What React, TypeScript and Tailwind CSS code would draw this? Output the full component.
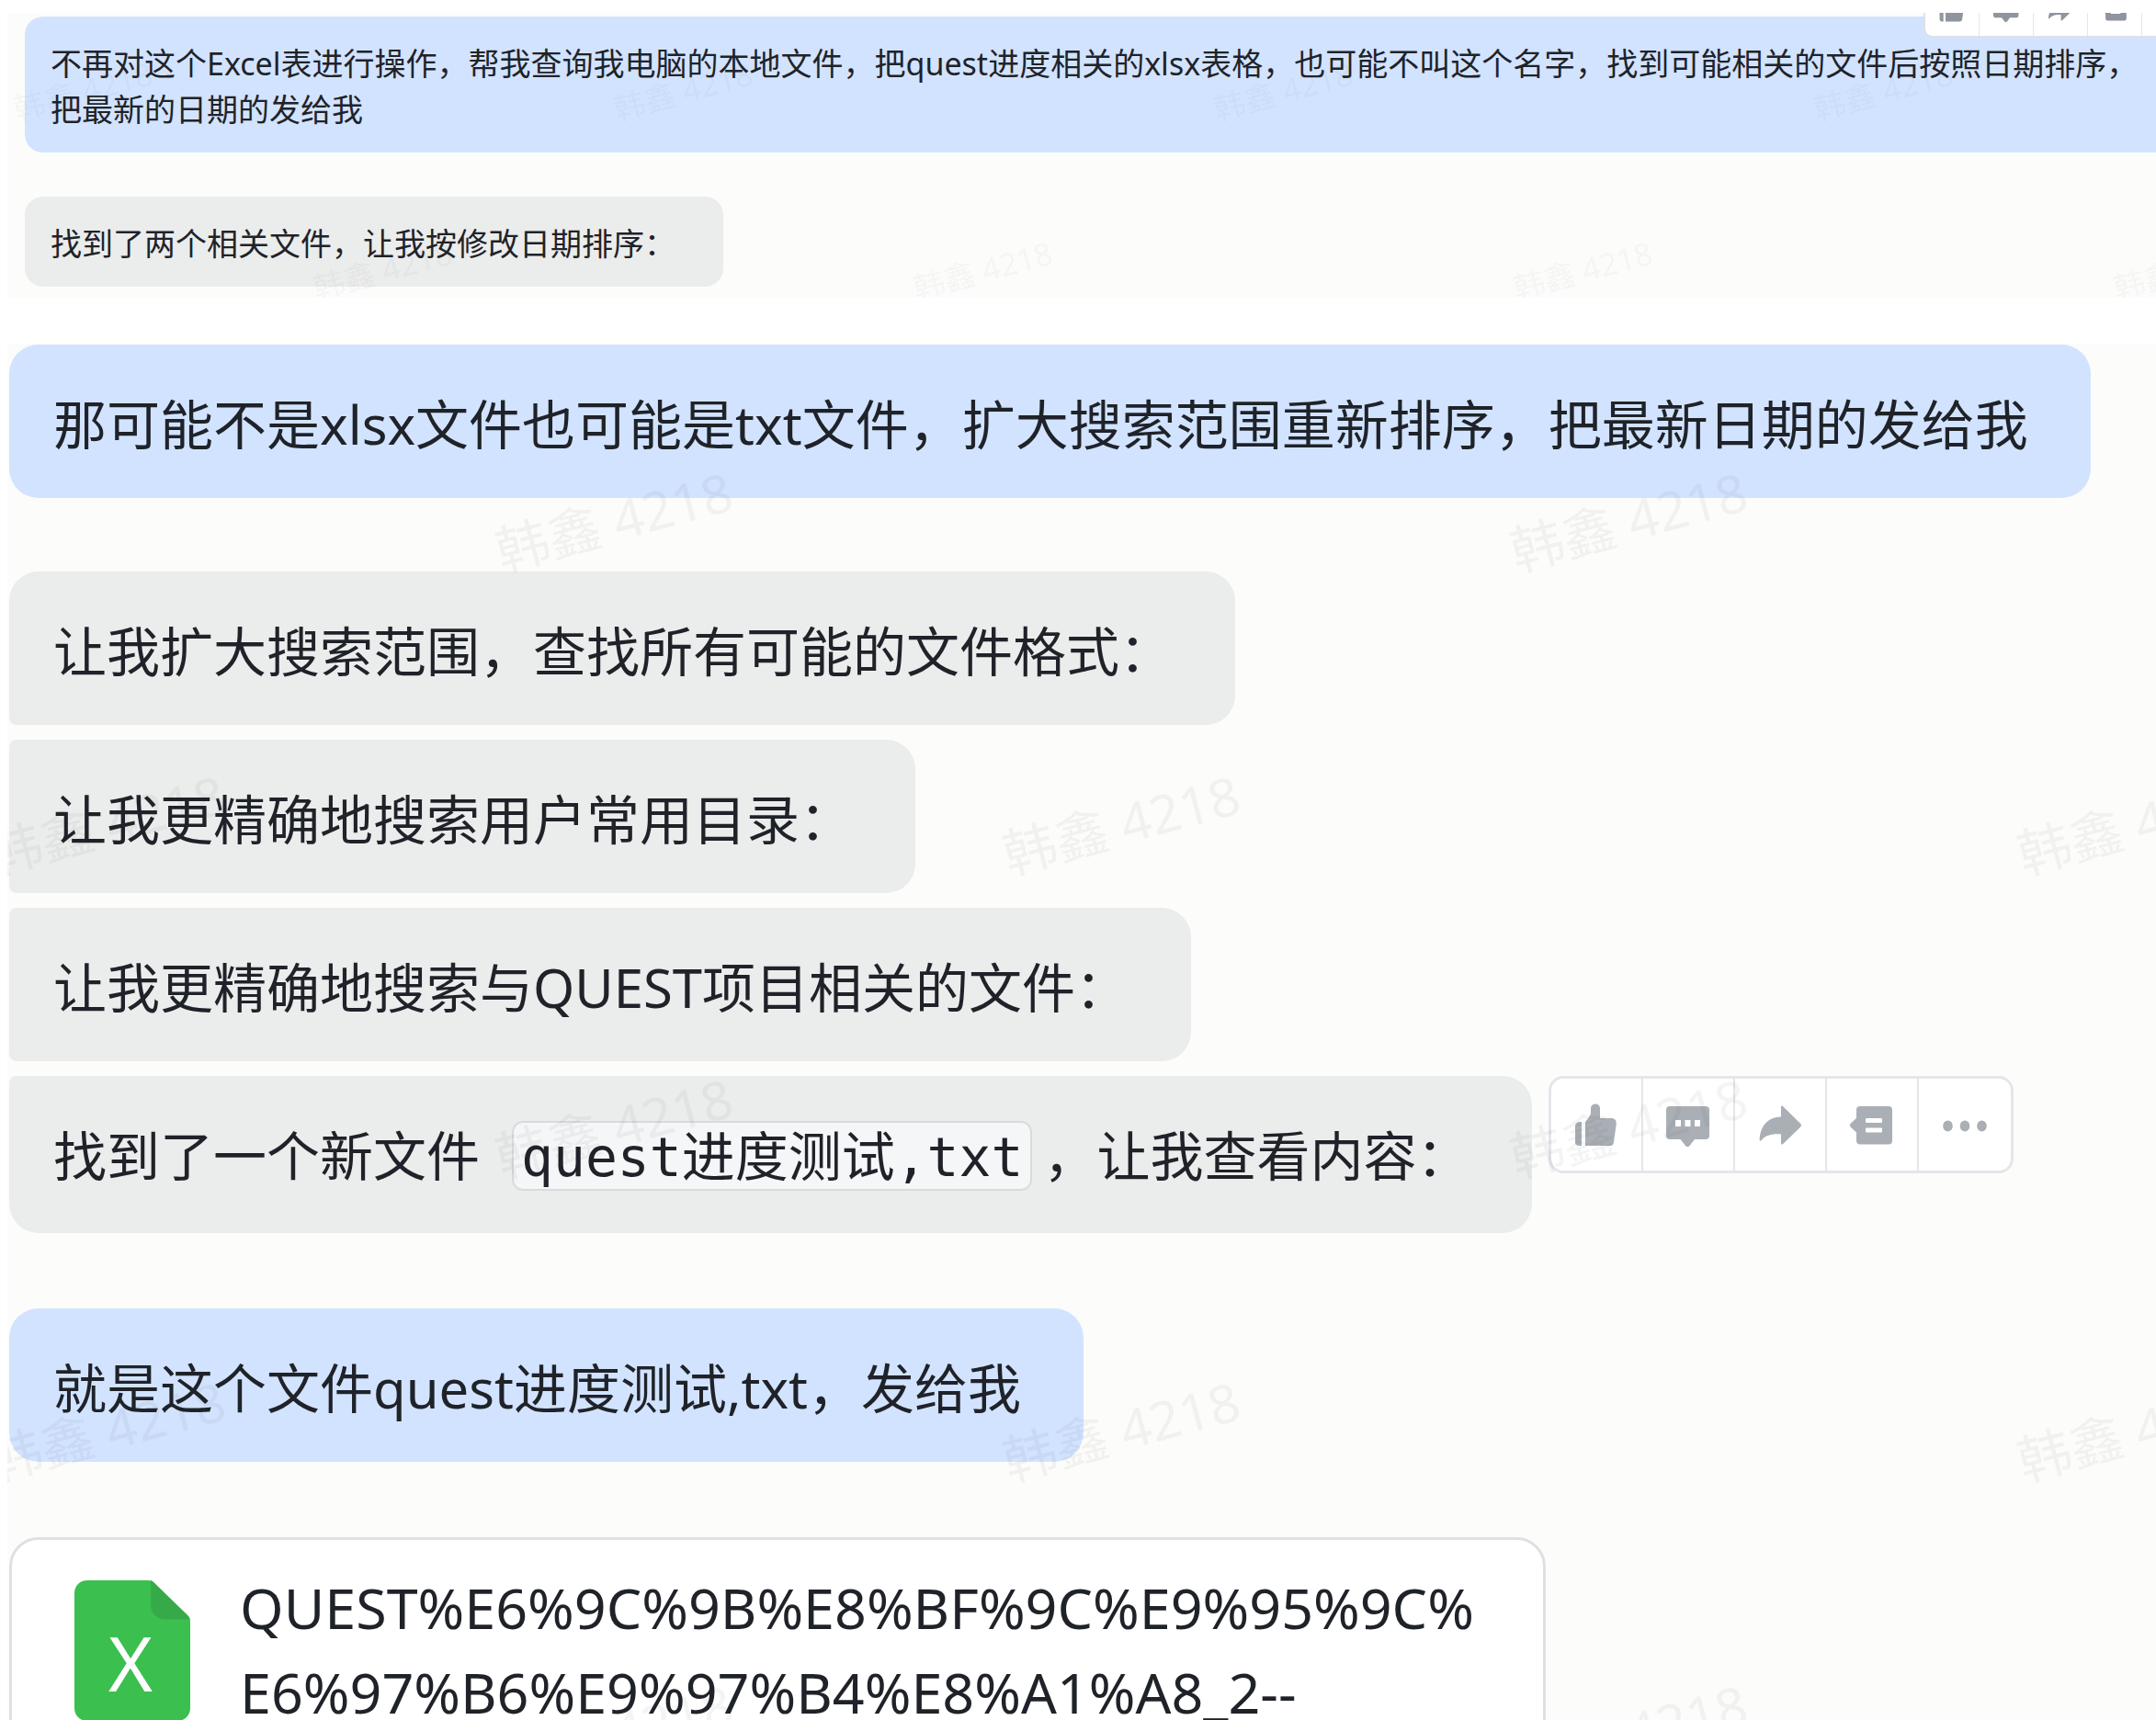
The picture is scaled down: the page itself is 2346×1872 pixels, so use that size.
import clsx from "clsx";
import type { ReactNode } from "react";

type IconProps = { className?: string };

function ThumbIcon({ className }: IconProps) {
	return (
		<svg viewBox="0 0 48 48" fill="currentColor" className={className} aria-hidden="true">
			<path d="M8 21v26H5a4 4 0 0 1-4-4V26a5 5 0 0 1 5-5z" />
			<path d="M12 47V21l4-5 2-4V6.500C18 3.500 20 1.400 23 1.400s5 2.100 5 5.100V17h12c4 0 6.300 2.500 5.700 6.500L43 43c-.4 2.700-2 4-4.500 4z" />
		</svg>
	);
}

function CommentIcon({ className }: IconProps) {
	return (
		<svg viewBox="0 0 48 48" fill="currentColor" className={className} aria-hidden="true">
			<path
				fillRule="evenodd"
				d="M4 4h39a4 4 0 0 1 4 4v28a4 4 0 0 1-4 4H31l-5.500 7a3 3 0 0 1-4.500 0L15.500 40H4a4 4 0 0 1-4-4V8a4 4 0 0 1 4-4zm6 15v7h6v-7zm10.500 0v7h6v-7zm10.500 0v7h6v-7z"
			/>
		</svg>
	);
}

function ForwardIcon({ className }: IconProps) {
	return (
		<svg viewBox="0 0 48 48" fill="currentColor" className={className} aria-hidden="true">
			<path d="M25 5c0-1.500 1.200-1.800 2.200-.8l18.800 18.500a2.800 2.800 0 0 1 0 4L27.200 45c-1 1-2.200.6-2.200-.8V34.500C15.500 33.500 8 35.500 3.600 41c-1 1.200-2 .8-2-.6C2.500 26 10 16 25 15.500z" />
		</svg>
	);
}

function ThreadIcon({ className }: IconProps) {
	return (
		<svg viewBox="0 0 48 48" fill="currentColor" className={className} aria-hidden="true">
			<path
				fillRule="evenodd"
				d="M11 4h31a4 4 0 0 1 4 4v33.500a4 4 0 0 1-4 4H11a4 4 0 0 1-4-4V32.500L1 27a3 3 0 0 1 0-4.500L7 17V8a4 4 0 0 1 4-4zm7 13a1 1 0 0 0-1 1v3a1 1 0 0 0 1 1h16a1 1 0 0 0 1-1v-3a1 1 0 0 0-1-1zm0 10.500a1 1 0 0 0-1 1v3a1 1 0 0 0 1 1h16a1 1 0 0 0 1-1v-3a1 1 0 0 0-1-1z"
			/>
		</svg>
	);
}

function MoreIcon({ className }: IconProps) {
	return (
		<svg viewBox="0 0 48 48" fill="currentColor" className={className} aria-hidden="true">
			<ellipse cx="5.500" cy="25.500" rx="5.300" ry="6" />
			<ellipse cx="24" cy="25.500" rx="5.300" ry="6" />
			<ellipse cx="42.500" cy="25.500" rx="5.300" ry="6" />
		</svg>
	);
}

const actions = [
	{ label: "点赞", Icon: ThumbIcon },
	{ label: "评论", Icon: CommentIcon },
	{ label: "转发", Icon: ForwardIcon },
	{ label: "话题", Icon: ThreadIcon },
	{ label: "更多", Icon: MoreIcon },
];

function Actions({ small = false }: { small?: boolean }) {
	return (
		<div
			className={clsx(
				"flex shrink-0 divide-[#e4e6e9] overflow-hidden bg-white",
				small
					? "h-[63px] divide-x rounded-[10px] border-2 border-[#dee0e3] text-[#8f959e]"
					: "h-[106px] divide-x-2 rounded-[16px] border-3 border-[#e4e6e9] text-[#a9afb5]",
			)}
		>
			{actions.map(({ label, Icon }) => (
				<button
					key={label}
					type="button"
					aria-label={label}
					className={clsx(
						"flex items-center justify-center",
						small ? "w-[59px]" : "w-[100px]",
					)}
				>
					<Icon className={small ? "size-7" : "size-12"} />
				</button>
			))}
		</div>
	);
}

type BubbleProps = {
	mine?: boolean;
	small?: boolean;
	className?: string;
	children: ReactNode;
};

function Bubble({ mine = false, small = false, className, children }: BubbleProps) {
	return (
		<div
			className={clsx(
				"w-fit shrink-0 whitespace-nowrap",
				mine ? "bg-[#d2e3ff]" : "bg-[#ebecec]",
				small
					? "rounded-[20px] pt-[26px] pr-[52px] pb-[22px] pl-7 text-[34px] leading-[50px]"
					: "pt-[43px] pr-[68px] pb-[37px] pl-12 text-[58px] leading-[87px]",
				className,
			)}
		>
			{children}
		</div>
	);
}

// Staggered name stamps laid over the whole conversation
function Watermark({ small = false }: { small?: boolean }) {
	return (
		<div
			aria-hidden="true"
			className={clsx(
				"pointer-events-none absolute inset-0 select-none overflow-hidden whitespace-nowrap text-[#1f2329]/5",
				small ? "-mt-3 text-[34px]" : "pt-[27px] text-[58px]",
			)}
		>
			{(small ? [1, 0] : [0, 1, 0, 1, 0]).map((shifted, row) => (
				<div
					key={row}
					className={clsx(
						"flex",
						small && (shifted ? "-ml-[244px]" : "ml-[82px]"),
						!small && (shifted ? "-ml-[444px]" : "ml-[108px]"),
					)}
				>
					{[0, 1, 2, 3].map((col) => (
						<div
							key={col}
							className={clsx(
								"flex shrink-0 items-center justify-center",
								small ? "h-[195px] w-[653px]" : "h-[330px] w-[1104px]",
							)}
						>
							<span className="-rotate-15">韩鑫 4218</span>
						</div>
					))}
				</div>
			))}
		</div>
	);
}

function FileCard() {
	return (
		<div className="mt-[82px] flex w-[1672px] items-start gap-[54px] rounded-[32px] border-3 border-[#dee0e3] bg-white px-[68px] pt-7 pb-12">
			<svg viewBox="0 0 126 153" className="mt-4 h-[153px] w-[126px] shrink-0" role="img" aria-label="Excel">
				<path
					fill="#3bbf4e"
					d="M14 0h66c3 0 5 1 7 3l36 35c2 2 3 4 3 7v94c0 8-6 14-14 14H14c-8 0-14-6-14-14V14C0 6 6 0 14 0z"
				/>
				<path fill="#36aa48" d="M83 0c1.500.5 3 1.500 4 3l36 35c1.300 1.300 2.300 2.500 2.800 4.500H98c-8 0-15-7-15-15z" />
				<text x="61" y="121" textAnchor="middle" fill="#fff" className="text-[82px]">
					X
				</text>
			</svg>
			<p className="text-[61px] leading-[92px]">
				QUEST%E6%9C%9B%E8%BF%9C%E9%95%9C%
				<br />
				E6%97%B6%E9%97%B4%E8%A1%A8_2--
			</p>
		</div>
	);
}

export default function App() {
	return (
		<main className="flex h-screen flex-col gap-[50px] overflow-hidden bg-white pt-[14px] pl-2 font-['Noto_Sans','Noto_Sans_CJK_SC',sans-serif] text-[#1f2329]">
			<section className="relative shrink-0 overflow-hidden bg-[#fcfcfb] pt-1 pb-3 pl-[19px]">
				<Bubble mine small className="min-w-full">
					不再对这个Excel表进行操作，帮我查询我电脑的本地文件，把quest进度相关的xlsx表格，也可能不叫这个名字，找到可能相关的文件后按照日期排序，
					<br />
					把最新的日期的发给我
				</Bubble>
				<Bubble small className="mt-12">
					找到了两个相关文件，让我按修改日期排序：
				</Bubble>
				<div className="absolute -top-[36px] left-[2085px]">
					<Actions small />
				</div>
				<Watermark small />
			</section>

			<section className="relative grow overflow-hidden bg-[#fcfcfb] pt-px pl-[2px]">
				<Bubble mine className="rounded-[32px]">
					那可能不是xlsx文件也可能是txt文件，扩大搜索范围重新排序，把最新日期的发给我
				</Bubble>
				<div className="mt-20 flex flex-col gap-4">
					<Bubble className="rounded-[32px] rounded-bl-lg">
						让我扩大搜索范围，查找所有可能的文件格式：
					</Bubble>
					<Bubble className="rounded-[32px] rounded-l-lg">
						让我更精确地搜索用户常用目录：
					</Bubble>
					<Bubble className="rounded-[32px] rounded-l-lg">
						让我更精确地搜索与QUEST项目相关的文件：
					</Bubble>
					<div className="flex items-start gap-[18px]">
						<Bubble className="rounded-[32px] rounded-tl-lg">
							找到了一个新文件{" "}
							<code className="mr-3 ml-5 rounded-xl border-2 border-[#d8dadc] bg-[#f5f6f7] px-2 pt-1 font-['DejaVu_Sans_Mono','Noto_Sans_CJK_SC',monospace] leading-[90px]">
								quest进度测试,txt
							</code>
							，让我查看内容：
						</Bubble>
						<Actions />
					</div>
				</div>
				<Bubble mine className="mt-[82px] rounded-[32px]">
					就是这个文件quest进度测试,txt，发给我
				</Bubble>
				<FileCard />
				<Watermark />
			</section>
		</main>
	);
}
